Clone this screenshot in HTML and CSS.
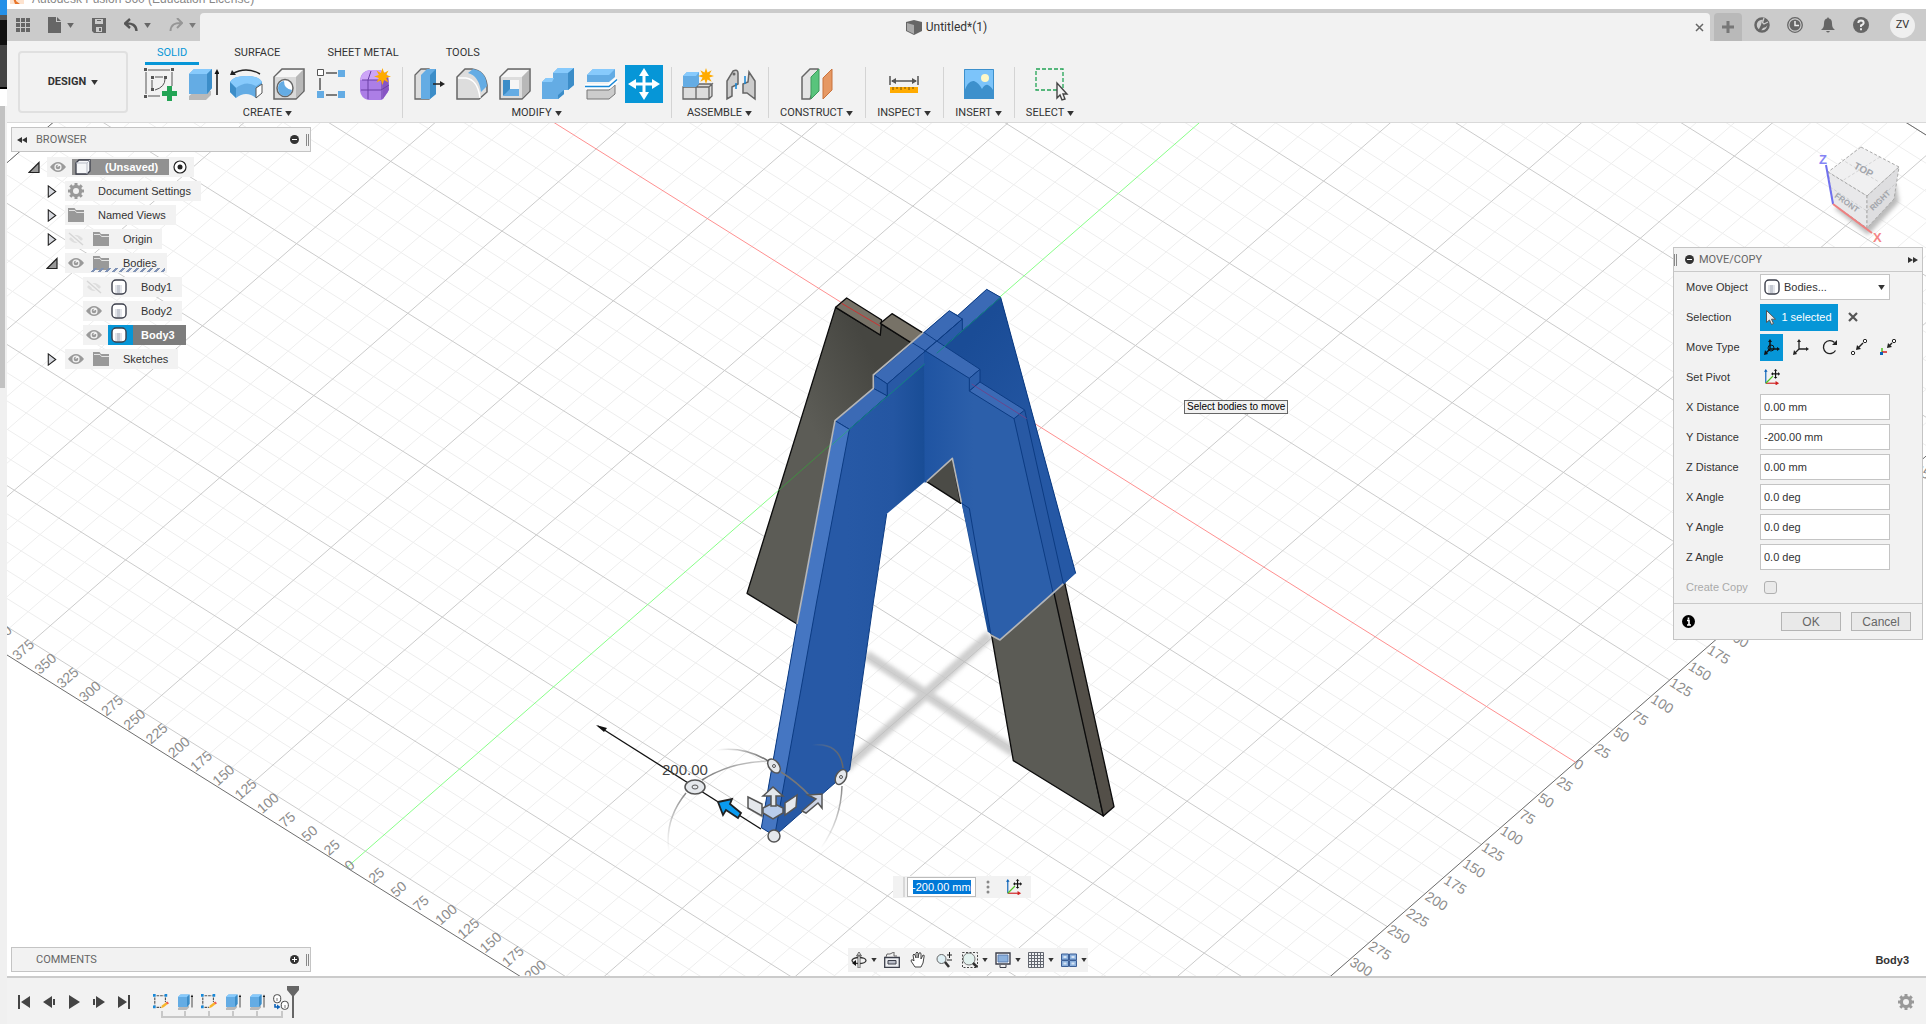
FILE: index.html
```html
<!DOCTYPE html>
<html lang="en">
<head>
<meta charset="utf-8">
<title>Autodesk Fusion 360</title>
<link rel="stylesheet" href="styles.css">
<script src="grid.js" defer></script>
</head>
<body>
<svg class="defs" aria-hidden="true">
  <symbol id="caret" viewBox="0 0 8 6"><path d="M0 0h8L4 6z" fill="currentColor"/></symbol>
  <symbol id="eye" viewBox="0 0 16 12"><path d="M0 6Q8-4 16 6Q8 16 0 6z" fill="#9a9a9a"/><circle cx="8" cy="6" r="3.6" fill="#f2f2f2"/><circle cx="8" cy="6" r="2.3" fill="#9a9a9a"/><path d="M8 6V4.500h2" stroke="#f2f2f2" fill="none"/></symbol>
  <symbol id="eye-off" viewBox="0 0 16 14"><path d="M1 7Q8-1 15 7Q8 15 1 7z" fill="#dedede"/><circle cx="8" cy="7" r="2.500" fill="#f2f2f2"/><path d="M1 1L15 13" stroke="#f2f2f2" stroke-width="4"/><path d="M1 1L15 13" stroke="#d6d6d6" stroke-width="1.500"/></symbol>
  <symbol id="folder" viewBox="0 0 16 14"><path d="M0 0h6.500L8 2h8v12H0z" fill="#999"/><path d="M1 2.500h6l1.500 2h7.500" stroke="#e4e4e4" fill="none"/></symbol>
  <symbol id="body" viewBox="0 0 16 16"><rect x="1" y="1" width="14" height="14" rx="4" fill="#fff" stroke="#3c3f4b" stroke-width="1.400"/><path d="M4 6h2v8H4z" fill="#e3e5ea"/><path d="M6 6h3v8H6z" fill="#c5c9d2"/><path d="M9 6h2v8H9z" fill="#e3e5ea"/></symbol>
  <symbol id="gear" viewBox="0 0 16 16"><path d="M6.500 0h3v2l1.700.7 1.500-1.400 2.100 2.100-1.500 1.500.7 1.600H16v3h-2l-.7 1.700 1.500 1.500-2.100 2.100-1.500-1.500-1.700.7v2h-3v-2l-1.700-.7-1.500 1.500-2.100-2.100 1.500-1.500L2 9.500H0v-3h2l.7-1.600L1.200 3.400l2.100-2.100 1.500 1.400L6.500 2z" fill="#999"/><circle cx="8" cy="8" r="3" fill="#f2f2f2"/></symbol>
  <symbol id="tri-closed" viewBox="0 0 10 14"><path d="M1 1l8 6-8 6z" fill="#d8dae0" stroke="#222" stroke-width="1.200"/></symbol>
  <symbol id="tri-open" viewBox="0 0 12 12"><path d="M1 11L11 1v10z" fill="#999" stroke="#222" stroke-width="1.200"/></symbol>
  <symbol id="extrude" viewBox="0 0 32 32"><path d="M2 28l6-5h16v4l-5 5H2z" fill="#b9b9b9"/><path d="M2 26V6l5-5h18v19l-5 6z" fill="#64ace4"/><path d="M2 6l5-5h18l-5 5z" fill="#87cafc"/><path d="M20 6l5-5v19l-5 6z" fill="#3c8dc8"/><path d="M30 27V4" stroke="#111" stroke-width="1.500"/><path d="M27.500 6L30 1l2.500 5z" fill="#111"/></symbol>
  <symbol id="sketch-small" viewBox="0 0 18 18"><path d="M4 2h9M2 4v9M14 4v5M4 15h5" stroke="#555" stroke-width="1.300" stroke-dasharray="3 1" fill="none"/><path d="M0 0h3v3H0zM13 0h3v3h-3zM0 13h3v3H0z" fill="#1788d8"/><path d="M9 16l1-3 5-4 2 2-5 4z" fill="#f7b52c"/><path d="M14.500 9.500l1.500-1.200 2 2-1.500 1.200z" fill="#e55"/></symbol>
  <symbol id="pivot" viewBox="0 0 18 18"><path d="M2 16V2" stroke="#0b62b8" stroke-width="1.300"/><path d="M0 3l2-3 2 3z" fill="#0b62b8"/><path d="M2 16h12" stroke="#d02020" stroke-width="1.300"/><path d="M13 13.500l4 2.500-4 2.500z" fill="#d02020"/><path d="M2 16l8-8" stroke="#4fc320" stroke-width="1.500"/><path d="M9 5.500h8M13 1.500v8" stroke="#111" stroke-width="1.300"/><path d="M8 5.500l2-2v4zM18 5.500l-2-2v4zM13 0l2 2h-4zM13 11l2-2h-4z" fill="#111"/></symbol>
  <symbol id="star" viewBox="0 0 16 16"><path d="M8 0l1.500 4.600L13.700 2.300 11.400 6.500 16 8l-4.600 1.500 2.300 4.200-4.200-2.300L8 16l-1.500-4.600-4.200 2.300 2.300-4.200L0 8l4.600-1.500L2.300 2.300l4.200 2.300z" fill="#ffab00"/></symbol>
</svg>

<aside class="desktop"><i class="d-blue"></i><i class="d-dark"></i><i class="d-gap"></i><i class="d-grey"></i></aside>

<div class="app">
  <header class="titlebar">
    <svg class="logo" viewBox="0 0 14 8"><path d="M0 0h14v6H0z" fill="#fde3cf"/><path d="M3 0h3v3l4 3H5z" fill="#e8762c"/></svg>
    <span>Autodesk Fusion 360 (Education License)</span>
  </header>

  <div class="tabbar">
    <nav class="quick">
      <button class="qb" aria-label="Data panel"><svg width="14" height="14" viewBox="0 0 14 14"><path d="M0 0h4v4H0zM5 0h4v4H5zM10 0h4v4h-4zM0 5h4v4H0zM5 5h4v4H5zM10 5h4v4h-4zM0 10h4v4H0zM5 10h4v4H5zM10 10h4v4h-4z" fill="#666"/></svg></button>
      <button class="qb" aria-label="File"><svg width="13" height="16" viewBox="0 0 13 16"><path d="M0 0h8v5h5v11H0zM9 0l4 4H9z" fill="#666"/></svg><svg class="car"><use href="#caret"/></svg></button>
      <button class="qb" aria-label="Save"><svg width="14" height="15" viewBox="0 0 14 15"><path d="M0 0h14v15H2l-2-2z" fill="#666"/><path d="M3 1h8v5H3zM4 9h6v5H4z" fill="#ccc"/><path d="M5 2h4v1H5zM7 10h2v3H7z" fill="#666"/></svg></button>
      <button class="qb" aria-label="Undo"><svg width="14" height="14" viewBox="0 0 14 14"><path d="M6 1L1 5.500 6 10M1 5.500Q12 4.500 12.500 13" fill="none" stroke="#555" stroke-width="2.400"/></svg><svg class="car"><use href="#caret"/></svg></button>
      <button class="qb dim" aria-label="Redo"><svg width="14" height="14" viewBox="0 0 14 14"><path d="M8 0l5 5-5 5M13 5Q2 4 1.500 13" fill="none" stroke="#8a8a8a" stroke-width="2"/></svg><svg class="car"><use href="#caret"/></svg></button>
    </nav>
    <div class="doc-tab">
      <h1><svg width="16" height="15" viewBox="0 0 16 15"><path d="M0 2l8-2 8 2v9l-8 4-8-4z" fill="#666"/><path d="M1 3l7 2v9l-7-3.500z" fill="#aaa"/></svg>Untitled*(1)</h1>
      <button class="close" aria-label="Close document"><svg width="9" height="9" viewBox="0 0 9 9"><path d="M1 1l7 7M8 1L1 8" stroke="#666" stroke-width="1.500"/></svg></button>
    </div>
    <button class="new-tab" aria-label="New design"><svg width="12" height="12" viewBox="0 0 12 12"><path d="M6 0v12M0 6h12" stroke="#777" stroke-width="3"/></svg></button>
    <div class="account">
      <button aria-label="Extensions"><svg width="16" height="16" viewBox="0 0 16 16"><circle cx="8" cy="8" r="6.500" fill="#ccc" stroke="#666" stroke-width="2.500"/><path d="M4 14l3-6 1-4 4-2 3 4-3 4-3 1-3 4z" fill="#666"/><path d="M10 1l-1.500 4.500L10 7l4-2" stroke="#ccc" stroke-width="1.300" fill="none"/></svg></button>
      <button aria-label="Job status"><svg width="16" height="16" viewBox="0 0 16 16"><circle cx="8" cy="8" r="7.300" fill="#ccc" stroke="#666" stroke-width="1.300"/><circle cx="8" cy="8" r="5.500" fill="#666"/><path d="M8 4v4.500h4" stroke="#eee" stroke-width="1.500" fill="none"/></svg></button>
      <button aria-label="Notifications"><svg width="14" height="16" viewBox="0 0 14 16"><path d="M7 0l1 1.500q3 .5 3 5Q11 11 14 13H0q3-2 3-6.500 0-4.500 3-5zM5 14h4q-2 3-4 0z" fill="#666"/></svg></button>
      <button aria-label="Help"><svg width="16" height="16" viewBox="0 0 16 16"><circle cx="8" cy="8" r="8" fill="#666"/><path d="M5.300 6Q5.300 3.500 8 3.500T10.700 6Q10.500 7.500 8 8.500V10M8 11.300v2" stroke="#eee" stroke-width="1.900" fill="none"/></svg></button>
      <button class="avatar">ZV</button>
    </div>
  </div>

  <div class="toolbar">
    <button class="workspace">DESIGN <svg class="car"><use href="#caret"/></svg></button>
    <div class="ribbon">
      <nav class="tabs"><a class="on" href="#solid">SOLID</a><a href="#surface">SURFACE</a><a href="#sheet">SHEET METAL</a><a href="#tools">TOOLS</a></nav>
      <div class="groups">
        <section class="group">
          <div class="icons">
            <button aria-label="Create sketch"><svg viewBox="0 0 32 32"><path d="M2 4v22M4 2h22M28 4v14M4 28h12" stroke="#555" stroke-width="1"/><path d="M0 0h3v3H0zM27 0h3v3h-3zM0 27h3v3H0z" fill="#555"/><path d="M8 12v8M11 9h8M21 11q0 8-10 11" fill="none" stroke="#555" stroke-width="1"/><path d="M7 8h3v3H7zM20 8h3v3h-3zM7 20h3v3H7z" fill="#555"/><path d="M23 18h5v5h5v5h-5v5h-5v-5h-5v-5h5z" fill="#23a455"/></svg></button>
            <button aria-label="Extrude"><svg><use href="#extrude"/></svg></button>
            <button aria-label="Revolve"><svg viewBox="0 0 32 32"><path d="M0 14q3-6 16-6t16 6v10l-6 6q-10-8-20 0l-6-6z" fill="#64ace4"/><path d="M0 14q3-6 16-6t16 6l-6 4Q16 12 6 20z" fill="#87cafc"/><path d="M0 14l6 6v10l-6-6z" fill="#3c8dc8"/><path d="M26 20l6-4v9l-6 5z" fill="#fff" stroke="#555"/><path d="M2 6q14-8 28 0" stroke="#222" fill="none" stroke-width="1.500"/><path d="M0 7l2-5 4 5z" fill="#222"/></svg></button>
            <button aria-label="Hole"><svg viewBox="0 0 32 32"><path d="M1 31V9l8-8h22v22l-8 8z" fill="#d9d9d9" stroke="#666" stroke-width="1.500"/><path d="M2 9l7.500-7H30l-7 7z" fill="#f6f6f6"/><path d="M23 9l7-7v21l-7 7z" fill="#b8b8b8"/><ellipse cx="12" cy="20" rx="8" ry="8.500" fill="#fff" stroke="#666" stroke-width="1.500"/><path d="M11 13q0 8 8 9-2 6-7 6-7-1-7-8 0-6 6-7z" fill="#64ace4"/></svg></button>
            <button aria-label="Pattern"><svg viewBox="0 0 32 32"><path d="M10 5h11M4 10v12M10 27h11" stroke="#555" stroke-width="1.500"/><path d="M1.500 1.500h6v6h-6z" fill="#fff" stroke="#555"/><path d="M22 2h7v7h-7zM1 23h7v7H1zM22 23h7v7h-7z" fill="#64ace4"/></svg></button>
            <button aria-label="Create form"><svg viewBox="0 0 32 32"><path d="M1 12Q2 3 11 2h10q9 3 9 12l-1 10-6 8H9q-7-2-8-9z" fill="#ac7ee6"/><path d="M1 12Q3 3 11 2h10q5 2 7 7l-6 3H6z" fill="#cda5f7"/><path d="M24 12l5-3 1 13-6 9z" fill="#8754c4"/><path d="M12 3l-3 9v19M2 22h20l8-5M3 12h20v19" stroke="#6a3fa5" fill="none"/><use href="#star" x="15" y="0" width="17" height="17"/></svg></button>
          </div>
          <button class="glabel">CREATE <svg class="car"><use href="#caret"/></svg></button>
        </section>
        <section class="group">
          <div class="icons">
            <button aria-label="Press pull"><svg viewBox="0 0 32 32"><path d="M2 31V7l6-6h8v30z" fill="#ddd" stroke="#666" stroke-width="1.300"/><path d="M8 31V7l6-6h9v25l-6 5z" fill="#64ace4"/><path d="M17 7l6-6v25l-6 5z" fill="#3c8dc8"/><path d="M20 16h8" stroke="#222" stroke-width="1.500"/><path d="M27 13l5 3-5 3z" fill="#222"/></svg></button>
            <button aria-label="Fillet"><svg viewBox="0 0 32 32"><path d="M1 31V9l8-8h7q13 2 15 16v7l-8 7z" fill="#ddd" stroke="#666" stroke-width="1.500"/><path d="M12 5l5-4q13 2 14 17l-6 6Q23 8 12 5z" fill="#64ace4"/><path d="M2 10h8q12 2 14 20" stroke="#fff" fill="none" stroke-width="1.500"/></svg></button>
            <button aria-label="Shell"><svg viewBox="0 0 32 32"><path d="M1 31V9l8-8h22v22l-8 8z" fill="#ddd" stroke="#666" stroke-width="1.500"/><path d="M2 9l7.500-7H30l-7 7z" fill="#f6f6f6"/><path d="M23 9l7-7v21l-7 7z" fill="#b8b8b8"/><path d="M4 12h16v16H4z" fill="#f6f6f6"/><path d="M4 12h7v11L4 28z" fill="#3c8dc8"/><path d="M4 28l7-7h9v7z" fill="#64ace4"/></svg></button>
            <button aria-label="Combine"><svg viewBox="0 0 32 32"><path d="M0 31V14l4-4h7V5l5-5h16v17l-6 5h-4v4l-6 5z" fill="#64ace4"/><path d="M0 14l4-4h8l-2 4zM11 5l5-5h16l-6 5z" fill="#87cafc"/><path d="M26 5l6-5v17l-6 5zM16 27l6-5v4l-6 5z" fill="#3c8dc8"/></svg></button>
            <button aria-label="Split body"><svg viewBox="0 0 32 32"><path d="M2 14V7l6-6h22v8l-6 5z" fill="#64ace4"/><path d="M2 7l6-6h22l-6 6z" fill="#87cafc"/><path d="M2 22h22l6-5v9l-6 5H2z" fill="#ccc" stroke="#777"/><path d="M0 18.500h24l8-7" stroke="#fff" stroke-width="5" fill="none"/><path d="M0 18.500h24l8-7" stroke="#1788d8" stroke-width="1.500" fill="none"/></svg></button>
            <button class="active" aria-label="Move/Copy"><svg viewBox="0 0 32 32"><path d="M16 5v22M5 16h22" stroke="#fff" stroke-width="3"/><path d="M16 0l5 8H11zM16 32l5-8H11zM0 16l8-5v10zM32 16l-8-5v10z" fill="#fff"/></svg></button>
          </div>
          <button class="glabel">MODIFY <svg class="car"><use href="#caret"/></svg></button>
        </section>
        <section class="group">
          <div class="icons">
            <button aria-label="New component"><svg viewBox="0 0 32 32"><path d="M1 19h13v12H1zM14 19h13v12H14zM14 19l3-3h13l-3 3zM27 19l3-3v12l-3 3z" fill="#ddd" stroke="#666" stroke-width="1.300"/><path d="M1 18V8l4-4h12v12l-3 3H1z" fill="#64ace4"/><path d="M1 8l4-4h12l-3 4z" fill="#87cafc"/><use href="#star" x="16" y="0" width="16" height="16"/></svg></button>
            <button aria-label="Joint"><svg viewBox="0 0 32 32"><path d="M2 31V13L8 3q5-2 5 2v11l-6 3v9zM30 31V13l-6-9-1 10-5 2v9h4z" fill="#ccc" stroke="#666" stroke-width="1.500"/><circle cx="9" cy="6" r="1.500" fill="#666"/><path d="M11 21v-6M20 8v8" stroke="#1788d8" stroke-width="1.500"/></svg></button>
          </div>
          <button class="glabel">ASSEMBLE <svg class="car"><use href="#caret"/></svg></button>
        </section>
        <section class="group">
          <div class="icons"><button aria-label="Offset plane"><svg viewBox="0 0 32 32"><path d="M1 31V9l8-8h8v8l-8 22z" fill="#e4e4e4" stroke="#666" stroke-width="1.500"/><path d="M10 31V9l8-8v22z" fill="#58c47c" stroke="#3c9a5c"/><path d="M22 31V10l9-9v21z" fill="#e69863" stroke="#c9733c"/></svg></button></div>
          <button class="glabel">CONSTRUCT <svg class="car"><use href="#caret"/></svg></button>
        </section>
        <section class="group">
          <div class="icons"><button aria-label="Measure"><svg viewBox="0 0 32 32"><path d="M2 8v9M30 8v9M4 13h24" stroke="#555" stroke-width="1.500"/><path d="M3 13l5-3v6zM29 13l-5-3v6z" fill="#555"/><path d="M2 19h28v6H2z" fill="#ffab00"/><path d="M5 19v3M9 19v2M13 19v3M17 19v2M21 19v3M25 19v2" stroke="#7a5200"/></svg></button></div>
          <button class="glabel">INSPECT <svg class="car"><use href="#caret"/></svg></button>
        </section>
        <section class="group">
          <div class="icons"><button aria-label="Insert image"><svg viewBox="0 0 32 32"><path d="M1 1h30v30H1z" fill="#7cc4fa"/><path d="M1 24Q5 12 11 13q5 2 8 8 3-5 6-4 4 2 6 7v7H1z" fill="#3d90cc"/><circle cx="22" cy="10" r="4" fill="#fdf8c8"/><path d="M1.500 1.500h29v29h-29z" fill="none" stroke="#3d90cc"/></svg></button></div>
          <button class="glabel">INSERT <svg class="car"><use href="#caret"/></svg></button>
        </section>
        <section class="group">
          <div class="icons"><button aria-label="Select"><svg viewBox="0 0 32 32"><path d="M2 1h27v21H2z" fill="none" stroke="#23a455" stroke-width="1.300" stroke-dasharray="4 2"/><path d="M23 15v15l3-3 2 5 3-1-2-5h4z" fill="#f2f2f2" stroke="#444" stroke-width="1.400"/></svg></button></div>
          <button class="glabel">SELECT <svg class="car"><use href="#caret"/></svg></button>
        </section>
      </div>
    </div>
  </div>

  <main class="viewport">
    <svg class="scene" viewBox="7 123 1919 853" preserveAspectRatio="xMidYMid slice">
      <defs>
        <linearGradient id="faceL" gradientUnits="userSpaceOnUse" x1="380" y1="0" x2="612" y2="0"><stop offset="0" stop-color="#2759a6"/><stop offset=".6" stop-color="#2456a2"/><stop offset="1" stop-color="#194d96"/></linearGradient>
        <linearGradient id="faceR" gradientUnits="userSpaceOnUse" x1="612" y1="0" x2="760" y2="0"><stop offset="0" stop-color="#1f54a2"/><stop offset="1" stop-color="#2c5faa"/></linearGradient>
        <linearGradient id="faceB" gradientUnits="userSpaceOnUse" x1="700" y1="260" x2="1000" y2="520"><stop offset="0" stop-color="#1a4c96"/><stop offset="1" stop-color="#2558a5"/></linearGradient>
        <linearGradient id="dark" gradientUnits="userSpaceOnUse" x1="250" y1="420" x2="480" y2="300"><stop offset="0" stop-color="#5c5c56"/><stop offset="1" stop-color="#464641"/></linearGradient>
        <linearGradient id="arcA" x1="0" y1="1" x2="1" y2="0"><stop offset="0" stop-color="#888" stop-opacity="0"/><stop offset=".5" stop-color="#666"/><stop offset="1" stop-color="#888" stop-opacity=".4"/></linearGradient>
        <linearGradient id="arcB" x1="0" y1="0" x2="1" y2="0"><stop offset="0" stop-color="#888" stop-opacity="0"/><stop offset="1" stop-color="#666"/></linearGradient>
        <linearGradient id="arcC" x1="0" y1="0" x2="0" y2="1"><stop offset="0" stop-color="#888"/><stop offset="1" stop-color="#888" stop-opacity="0"/></linearGradient>
        <filter id="soft" x="-10%" y="-10%" width="120%" height="120%"><feGaussianBlur stdDeviation="2"/></filter>
      </defs>
      <g id="grid"></g>
      <g id="ruler" class="ruler"></g>
      <path d="M845 768L990 635M866 655L1014 752" stroke="#bdbdbd" stroke-width="10" opacity=".75" filter="url(#soft)"/>
      <g transform="translate(720 270) scale(.33333)" stroke-linejoin="round">
        <g stroke="#0c0c0c" stroke-width="4">
          <path d="M347 112L481 195V160L620 246 620 400 345 600 231 1062 81 970z" fill="url(#dark)"/>
          <path d="M347 112L380 84 485 150 481 195z" fill="#777267"/>
          <path d="M481 160L516 131 640 208 600 235z" fill="#777267"/>
          <path d="M800 1010L1000 940 1150 1638 880 1472z" fill="#5b5b55"/>
          <path d="M1000 960L1030 920 1182 1610 1150 1638z" fill="#534f48"/>
          <path d="M620 635L697 565 722 700z" fill="#4b4b46"/>
        </g>
        <path d="M365 100L480 168" stroke="#c33" stroke-width="3"/>
        <path d="M345 512L175 662" stroke="#3f8f3f" stroke-width="3"/>
        <path d="M345 452L460 355V315L688 122 715 136 800 58 842 82 1067 910 840 1110 803 1085 725 700 697 565 500 732 461 990 389 1500 164 1698 124 1673 244 990z" fill="url(#faceL)"/>
        <path d="M842 82L1067 910 1000 972 882 446 748 363 640 215z" fill="url(#faceB)"/>
        <path d="M612 242L748 325V363L882 446 1000 972 840 1110 812 1090 725 700 697 565 614 640z" fill="url(#faceR)"/>
        <path d="M882 446L914 420 1030 940 1000 972z" fill="#2859a4"/>
        <g fill="#3b6ab5" stroke="#0c3b83" stroke-width="3">
          <path d="M800 58L842 82 650 250 615 225z"/>
          <path d="M727 147V182L650 250 646 215z" fill="#2a5ba7"/>
          <path d="M688 122L727 147 502 342 463 316z"/>
          <path d="M463 316L502 342V378L460 355z" fill="#2d5fab"/>
          <path d="M502 342L612 245V282L502 378z" fill="#2859a5" stroke="none"/>
          <path d="M460 355L502 378 388 478 345 452z"/>
          <path d="M612 187L650 213 780 298 748 325 575 217z"/>
          <path d="M748 325L780 298V336L748 363z" fill="#2d5fab"/>
          <path d="M748 363L780 336 914 420 882 446z"/>
          <path d="M345 452L388 478 291 990 164 1698 124 1673 244 990z" fill="#4576c2"/>
        </g>
        <g fill="none" stroke="#0c3b83" stroke-width="3">
          <path d="M650 213L612 245M727 147L502 342M882 446L1000 972M914 420L1030 940M842 82L1067 910M725 700L748 715 812 1090M500 732L461 990 389 1500 164 1698M502 342V378"/>
          <path d="M388 478L614 282M650 250L842 82" stroke="#138484"/>
          <path d="M755 342L920 446" stroke="#69468e"/>
          <path d="M388 478L335 525" stroke="#2f9d8a"/>
        </g>
        <path d="M231 1062L345 452 460 355V315L610 187M620 635L697 565 724 697M812 1095L840 1110 1030 942" fill="none" stroke="#b6b6b6" stroke-width="5"/>
      </g>
      <g fill="none">
        <path d="M598 726L761 829" stroke="#111" stroke-width="1.300"/>
        <path d="M596 725l11 3-3 4z" fill="#111"/>
        <path d="M669 852Q664 820 686 793M702 780Q730 762 769 761" stroke="url(#arcA)" stroke-width="1.500"/>
        <path d="M716 750Q745 746 768 761" stroke="url(#arcB)" stroke-width="1.500"/>
        <path d="M781 772Q797 782 810 796" stroke="#777" stroke-width="1.500"/>
        <path d="M812 745Q840 742 843 768" stroke="url(#arcB)" stroke-width="1.500"/>
        <path d="M842 786Q841 820 821 848" stroke="url(#arcC)" stroke-width="1.500"/>
        <g fill="#e5e8ec" stroke="#555" stroke-width="1.500">
          <ellipse cx="695" cy="787" rx="10" ry="7"/><ellipse cx="695" cy="787" rx="3" ry="2" stroke-width="1"/>
          <ellipse cx="774" cy="766" rx="5" ry="8" transform="rotate(-38 774 766)"/><circle cx="774" cy="766" r="1.500" stroke-width="1"/>
          <ellipse cx="841" cy="777" rx="5" ry="8" transform="rotate(28 841 777)"/><circle cx="841" cy="777" r="1.500" stroke-width="1"/>
          <path d="M748 797l14 7v12l-14-8zM797 795l-12 8v12l11-8z"/>
          <path d="M763 808l10-5 10 5v5l-10 6-10-6z" fill="#b8cceb"/>
          <path d="M771 806v-10h-8l10-9 10 9h-7v10z"/>
          <path d="M802 811l14-12-8-4 14-1 0 14-4-5-12 10z" fill="#cdd4e4"/>
          <circle cx="774" cy="836" r="6"/>
        </g>
        <path d="M718 802l14-3-2 5 11 9-3 5-12-8-3 5z" fill="#0a9bf0" stroke="#222" stroke-width="1.800"/>
      </g>
      <text x="662" y="775" class="dim-text">200.00</text>
      <g class="cube">
        <path d="M1834 208L1868 235 1899 202 1896 184z" fill="#bbb" stroke="none" filter="url(#soft)"/>
        <path d="M1861 147l38 20-32 29-39-24z" fill="#f0f0f1"/><path d="M1828 172l39 24v32l-34-24z" fill="#e8e8ea"/><path d="M1867 196l32-29-5 32-27 29z" fill="#dedee0"/>
        <path d="M1841 159l38 23M1880 157l-38 24M1830 187l37 24M1867 211l29-28" fill="none" opacity=".4"/>
        <path d="M1826 165l7 39" stroke="#7070ee" stroke-width="2" stroke-dasharray="none"/><path d="M1833 204l39 29" stroke="#ef8080" stroke-width="2" stroke-dasharray="none"/>
        <text x="1853" y="168" transform="rotate(28 1853 168)" class="cube-t">TOP</text>
        <text x="1834" y="197" transform="rotate(35 1834 197)" class="cube-s">FRONT</text>
        <text x="1873" y="211" transform="rotate(-44 1873 211)" class="cube-s">RIGHT</text>
        <text x="1819" y="164" class="axis z">Z</text><text x="1873" y="242" class="axis x">X</text>
      </g>
    </svg>

    <section class="browser">
      <header class="bar"><svg width="10" height="6" viewBox="0 0 10 6"><path d="M5 0v6L0 3zM10 0v6L5 3z" fill="#333"/></svg><h2>BROWSER</h2><button class="dot" aria-label="Collapse"><svg viewBox="0 0 9 9"><path d="M2 4.500h5"/></svg></button><i class="grip"></i></header>
      <ul class="tree">
        <li class="l0"><svg class="tw"><use href="#tri-open"/></svg><div class="item"><svg class="eye"><use href="#eye"/></svg><b class="root"><svg width="16" height="16" viewBox="0 0 16 16"><path d="M1 4l3-3h11v11l-3 3H1z" fill="#f5f6f8" stroke="#3c3f4b" stroke-width="1.300"/><path d="M1 4h11v11M12 4l3-3" stroke="#b9bdc8" fill="none"/></svg>(Unsaved)</b><svg width="14" height="14" viewBox="0 0 14 14"><circle cx="7" cy="7" r="6" fill="#fff" stroke="#222" stroke-width="1.200"/><circle cx="7" cy="7" r="2.500" fill="#222"/></svg></div></li>
        <li class="l1"><svg class="tw"><use href="#tri-closed"/></svg><div class="item"><svg class="ic"><use href="#gear"/></svg><span>Document Settings</span></div></li>
        <li class="l1"><svg class="tw"><use href="#tri-closed"/></svg><div class="item"><svg class="ic fo"><use href="#folder"/></svg><span>Named Views</span></div></li>
        <li class="l1"><svg class="tw"><use href="#tri-closed"/></svg><div class="item"><svg class="eye"><use href="#eye-off"/></svg><svg class="ic fo"><use href="#folder"/></svg><span>Origin</span></div></li>
        <li class="l1"><svg class="tw"><use href="#tri-open"/></svg><div class="item hatched"><svg class="eye"><use href="#eye"/></svg><svg class="ic fo"><use href="#folder"/></svg><span>Bodies</span></div></li>
        <li class="l2"><div class="item"><svg class="eye"><use href="#eye-off"/></svg><svg class="ic"><use href="#body"/></svg><span>Body1</span></div></li>
        <li class="l2"><div class="item"><svg class="eye"><use href="#eye"/></svg><svg class="ic"><use href="#body"/></svg><span>Body2</span></div></li>
        <li class="l2"><div class="item sel"><svg class="eye"><use href="#eye"/></svg><i><svg class="ic"><use href="#body"/></svg></i><b>Body3</b></div></li>
        <li class="l1"><svg class="tw"><use href="#tri-closed"/></svg><div class="item"><svg class="eye"><use href="#eye"/></svg><svg class="ic fo"><use href="#folder"/></svg><span>Sketches</span></div></li>
      </ul>
    </section>

    <p class="tooltip">Select bodies to move</p>

    <form class="mini">
      <i class="handle"></i><input aria-label="Distance" value="-200.00 mm"><svg width="4" height="14" viewBox="0 0 4 14"><circle cx="2" cy="2" r="1.500" fill="#888"/><circle cx="2" cy="7" r="1.500" fill="#888"/><circle cx="2" cy="12" r="1.500" fill="#888"/></svg><button type="button" aria-label="Set pivot"><svg width="16" height="16"><use href="#pivot"/></svg></button>
    </form>

    <form class="dialog">
      <header class="dhead"><i class="grip"></i><button type="button" class="dot" aria-label="Collapse"><svg viewBox="0 0 9 9"><path d="M2 4.500h5"/></svg></button><h2>MOVE/COPY</h2><svg width="10" height="6" viewBox="0 0 10 6"><path d="M0 0v6l5-3zM5 0v6l5-3z" fill="#333"/></svg></header>
      <div class="fields">
        <label for="obj">Move Object</label><div class="select"><svg class="ic"><use href="#body"/></svg><select id="obj"><option>Bodies...</option></select><svg class="car"><use href="#caret"/></svg></div>
        <span>Selection</span><div class="row"><button type="button" class="picked"><svg width="10" height="15" viewBox="0 0 10 15"><path d="M.5.5v12l3-2.500 2 4.500 2-1-2-4.300h4z" fill="#eee" stroke="#555"/></svg>1 selected</button><button type="button" class="clear" aria-label="Clear selection"><svg width="10" height="10" viewBox="0 0 10 10"><path d="M1 1l8 8M9 1L1 9" stroke="#555" stroke-width="2.200"/></svg></button></div>
        <span>Move Type</span><div class="row types">
          <button type="button" class="active" aria-label="Free move"><svg viewBox="0 0 16 16"><path d="M6 10V2M6 10h8M6 10l-4 4" stroke="#111" stroke-width="1.500"/><path d="M4 3l2-3 2 3zM13 8l3 2-3 2zM0 16l1-5 3 4z" fill="#111"/><circle cx="7" cy="9" r="3" fill="none" stroke="#111"/></svg></button>
          <button type="button" aria-label="Translate"><svg viewBox="0 0 16 16"><path d="M6 10V2M6 10h8M6 10l-4 4" stroke="#222" stroke-width="1.300" fill="none"/><path d="M4 3l2-3 2 3zM13 8l3 2-3 2zM0 16l1-5 3 4z" fill="#222"/></svg></button>
          <button type="button" aria-label="Rotate"><svg viewBox="0 0 16 16"><path d="M12.500 3.500a6.500 6.500 0 1 0 1 8" stroke="#222" stroke-width="1.300" fill="none"/><path d="M15 1v5H10z" fill="#222"/></svg></button>
          <button type="button" aria-label="Point to point"><svg viewBox="0 0 16 16"><circle cx="2" cy="14" r="1.700" fill="#fff" stroke="#222"/><circle cx="14" cy="2" r="1.700" fill="#fff" stroke="#222"/><path d="M12 4L7 9" stroke="#222" stroke-width="1.400"/><path d="M5 11l1-5 4 4z" fill="#222"/></svg></button>
          <button type="button" aria-label="Point to position"><svg viewBox="0 0 16 16"><circle cx="14" cy="2" r="1.700" fill="#fff" stroke="#222"/><path d="M12 4L9 7" stroke="#222" stroke-width="1.400"/><path d="M7 9l1-5 4 4z" fill="#222"/><path d="M2 13V9" stroke="#4fc320" stroke-width="1.500"/><path d="M2 13h5" stroke="#d02020" stroke-width="1.500"/><path d="M0 13h3v3H0z" fill="#0b62b8"/></svg></button>
        </div>
        <span>Set Pivot</span><div class="row types"><button type="button" aria-label="Set pivot"><svg><use href="#pivot"/></svg></button></div>
        <label for="xd">X Distance</label><input id="xd" value="0.00 mm">
        <label for="yd">Y Distance</label><input id="yd" value="-200.00 mm">
        <label for="zd">Z Distance</label><input id="zd" value="0.00 mm">
        <label for="xa">X Angle</label><input id="xa" value="0.0 deg">
        <label for="ya">Y Angle</label><input id="ya" value="0.0 deg">
        <label for="za">Z Angle</label><input id="za" value="0.0 deg">
        <label for="cc" class="off">Create Copy</label><input id="cc" type="checkbox" disabled>
      </div>
      <footer><svg width="13" height="13" viewBox="0 0 13 13"><circle cx="6.500" cy="6.500" r="6.500" fill="#000"/><path d="M5 5.500h2V10M5 10h4M6.500 2.500v2" stroke="#fff" stroke-width="1.600" fill="none"/></svg><button type="button">OK</button><button type="button">Cancel</button></footer>
    </form>

    <section class="comments bar"><h2>COMMENTS</h2><button class="dot" aria-label="Expand"><svg viewBox="0 0 9 9"><path d="M2 4.500h5M4.500 2v5"/></svg></button><i class="grip"></i></section>

    <nav class="navbar">
      <button class="w" aria-label="Orbit"><svg viewBox="0 0 16 16"><ellipse cx="8" cy="8.500" rx="7" ry="3" fill="none" stroke="#333" stroke-width="1.300"/><path d="M7 3h2v13H7zM5.500 4L8 0l2.500 4z" fill="#fff" stroke="#444" stroke-width=".8"/><path d="M1 11l4-3v6z" fill="#111"/></svg><svg class="car"><use href="#caret"/></svg></button>
      <button aria-label="Look at"><svg viewBox="0 0 16 16"><path d="M.7 5.500h14.600v10H.7z" fill="#eef0f3" stroke="#3c3f4b" stroke-width="1.300"/><path d="M4 8.500h8V12H4z" fill="#b9bdc8" stroke="#3c3f4b"/><path d="M2 5l1-3h3l4-2v4h3" fill="none" stroke="#666"/></svg></button>
      <button aria-label="Pan"><svg viewBox="0 0 16 16"><path d="M5 15L1 9q0-2 2-1l1 1-1-6q1-2 2 0l1 3V1q1-2 2 0v5l1-5q2-1 2 1v5l2-4q2 0 1 2l-1 6-2 4z" fill="#fff" stroke="#444"/></svg></button>
      <button aria-label="Zoom"><svg viewBox="0 0 16 16"><circle cx="5.500" cy="7" r="4.500" fill="#dff0f5" stroke="#666"/><path d="M9 10l4 5" stroke="#333" stroke-width="2.500"/><path d="M11 3h5M13.500 0v6M11 8h5" stroke="#222"/></svg></button>
      <button class="w" aria-label="Fit"><svg viewBox="0 0 16 16"><path d="M.5.5h15v15H.5z" fill="none" stroke="#444" stroke-dasharray="2 1.500"/><circle cx="7" cy="7" r="6" fill="#e2f1ee" stroke="#777"/><path d="M11 11l4 4" stroke="#333" stroke-width="2.500"/></svg><svg class="car"><use href="#caret"/></svg></button>
      <button class="w" aria-label="Display settings"><svg viewBox="0 0 16 16"><path d="M1 1h14v11H1z" fill="#fff" stroke="#3c3f4b" stroke-width="1.400"/><path d="M3 3h10v7H3z" fill="#8cb1dd" stroke="#5a7db0"/><path d="M5 13v2.500h6V13" fill="none" stroke="#3c3f4b"/></svg><svg class="car"><use href="#caret"/></svg></button>
      <button class="w" aria-label="Grid and snaps"><svg viewBox="0 0 16 16"><path d="M.5.5h15v15H.5z" fill="#eef0f3"/><path d="M.5.500h15v15H.5zM3.500 0v16M6.500 0v16M9.500 0v16M12.500 0v16M0 3.500h16M0 6.500h16M0 9.500h16M0 12.500h16" fill="none" stroke="#62666f"/></svg><svg class="car"><use href="#caret"/></svg></button>
      <button class="w" aria-label="Viewports"><svg viewBox="0 0 16 16"><path d="M.5 2h7v6h-7zM8.500 2h7v6h-7zM.5 8.500h7v6h-7zM8.500 8.500h7v6h-7z" fill="#8cb1dd" stroke="#3d5f96"/><path d="M2.500 4h3v2h-3zM10.500 4h3v2h-3zM2.500 10.500h3v2h-3zM10.500 10.500h3v2h-3z" fill="#d7e5f5"/></svg><svg class="car"><use href="#caret"/></svg></button>
    </nav>
    <p class="status">Body3</p>
  </main>

  <footer class="timeline">
    <div class="play">
      <button aria-label="To start"><svg viewBox="0 0 14 14"><path d="M1 0h2v14H1zM13 1v12L4 7z" fill="#444"/></svg></button>
      <button aria-label="Step back"><svg viewBox="0 0 14 14"><path d="M10 1v12L1 7zM11 4h2v6h-2z" fill="#444"/></svg></button>
      <button aria-label="Play"><svg viewBox="0 0 14 14"><path d="M2 0l11 7-11 7z" fill="#444"/></svg></button>
      <button aria-label="Step forward"><svg viewBox="0 0 14 14"><path d="M4 1v12l9-6zM1 4h2v6H1z" fill="#444"/></svg></button>
      <button aria-label="To end"><svg viewBox="0 0 14 14"><path d="M11 0h2v14h-2zM1 1v12l9-6z" fill="#444"/></svg></button>
    </div>
    <div class="history">
      <div class="steps">
        <button aria-label="Sketch 1"><svg><use href="#sketch-small"/></svg></button>
        <button aria-label="Extrude 1"><svg><use href="#extrude"/></svg></button>
        <button aria-label="Sketch 2"><svg><use href="#sketch-small"/></svg></button>
        <button aria-label="Extrude 2"><svg><use href="#extrude"/></svg></button>
        <button aria-label="Extrude 3"><svg><use href="#extrude"/></svg></button>
        <button aria-label="Copy body"><svg viewBox="0 0 16 16"><rect x=".7" y=".7" width="7" height="8" rx="3" fill="#fff" stroke="#444"/><rect x="8.300" y="7.300" width="7" height="8" rx="3" fill="#fff" stroke="#444"/><path d="M3 4h2v3H3zM11 11h2v3h-2z" fill="#bbb"/><path d="M2 10v3h3" stroke="#0b62b8" stroke-width="1.600" fill="none"/><path d="M4 10.500l3.500 2.500L4 15.500z" fill="#0b62b8"/></svg></button>
      </div>
      <svg class="bracket" viewBox="0 0 122 7"><path d="M1 0v6h120V0M24 0v6M48 0v6M72 0v6M96 0v6" fill="none" stroke="#c8c8c8" stroke-width="2"/></svg>
    </div>
    <svg class="marker" width="12" height="32" viewBox="0 0 12 32"><path d="M0 0h12v4L7 10v22H5V10L0 4z" fill="#666"/></svg>
    <button class="prefs" aria-label="Timeline settings"><svg width="16" height="16"><use href="#gear"/></svg></button>
  </footer>
</div>
</body>
</html>
```
FILE: styles.css
```css
* { box-sizing: border-box; }
html, body { height: 100%; margin: 0; }
body {
  display: flex;
  overflow: hidden;
  background: #fff;
  color: #333;
  font: 11px/16px "Liberation Sans", Arial, sans-serif;
}
h1, h2, p, ul { margin: 0; padding: 0; font-weight: normal; }
button, input, select { font: inherit; color: inherit; }
button { padding: 0; border: 0; background: none; display: flex; flex: none; align-items: center; justify-content: center; }
svg { display: block; flex: none; }
.defs { position: absolute; width: 0; height: 0; }
.car { width: 7px; height: 5px; color: #333; }

.desktop { display: flex; flex-direction: column; flex: 0 0 7px; background: #f0f0f0; }
.d-blue { height: 15px; background: #2490e8; }
.d-dark { height: 74px; background: linear-gradient(#555 0 5px, #111 5px 30px, #444 30px 72px, #000 72px); }
.d-gap { height: 17px; background: #fff; }
.d-grey { height: 282px; background: #c2c2c2; border-right: 2px solid #f0f0f0; }

.app { display: flex; flex-direction: column; flex: 1; min-width: 0; }
.titlebar { display: flex; align-items: flex-end; gap: 8px; height: 9px; padding: 0 0 3px 3px; overflow: hidden; color: #888; font-size: 12px; line-height: 14px; }
.logo { width: 14px; height: 8px; }

.tabbar { display: flex; height: 32px; padding-top: 4px; background: #cbcbcb; }
.quick { display: flex; align-items: center; gap: 18px; width: 193px; padding: 0 0 4px 9px; }
.qb { gap: 6px; }
.quick .car { color: #666; }
.dim { opacity: .8; }
.doc-tab { display: flex; flex: 1; align-items: center; padding: 0 5px 0 0; background: #f2f2f2; border-radius: 4px 4px 0 0; }
.doc-tab h1 { display: flex; flex: 1; justify-content: center; align-items: center; gap: 4px; font: 12px/16px Roboto, sans-serif; }
.close { width: 12px; height: 16px; }
.new-tab { width: 28px; margin-left: 4px; background: #b9b9b9; border-radius: 4px 4px 0 0; }
.account { display: flex; align-items: center; gap: 17px; padding: 0 11px 4px 12px; }
.account button { min-width: 16px; }
.account .avatar { width: 25px; height: 25px; margin-left: 4px; border-radius: 50%; background: #efefef; font: 11px/16px Roboto, sans-serif; }

.toolbar { display: flex; height: 82px; background: #f2f2f2; border-bottom: 1px solid #d9d9d9; font-family: Roboto, sans-serif; }
.workspace { gap: 5px; width: 110px; height: 62px; margin: 10px 6px 0 11px; border: 2px solid #e0e0e0; border-radius: 4px; font-weight: bold; }
.ribbon { display: flex; flex-direction: column; }
.tabs { display: flex; gap: 23px; height: 24px; padding-left: 11px; }
.tabs a { padding: 4px 12px 0; color: #333; text-decoration: none; }
.tabs .on { color: #0696d7; border-bottom: 3px solid #0696d7; }
.groups { display: flex; }
.group { position: relative; display: flex; flex-direction: column; align-items: center; gap: 2px; padding: 0 7px 0 5px; }
.group:not(:last-child)::after { content: ""; position: absolute; right: 0; top: 2px; height: 51px; border-right: 1px solid #d4d4d4; }
.icons { display: flex; gap: 5px; padding: 0 2px; }
.icons button { width: 38px; height: 38px; }
.icons svg { width: 32px; height: 32px; overflow: visible; }
.active { background: #0696d7; }
.glabel { gap: 3px; padding: 0 6px; height: 16px; white-space: nowrap; }

.viewport { position: relative; flex: 1; min-height: 0; overflow: hidden; background: #fff; }
.scene { position: absolute; inset: 0; width: 100%; height: 100%; }
.minor { stroke: #eee; }
.major { stroke: #cbcbcb; }
.edge { stroke: #6e6e6e; }
.axis-x { stroke: #ff9090; }
.axis-y { stroke: #88ff88; }
.ruler { fill: #8d8d8d; font-size: 14px; }
.dim-text { fill: #444; font-size: 15px; }
.cube { stroke: #aaa; stroke-dasharray: 3 2; }
.cube text { stroke: none; fill: #a2a5ab; font-weight: bold; }
.cube .cube-t { font-size: 10px; }
.cube .cube-s { font-size: 8px; }
.cube .axis { font-size: 13px; }
.cube .z { fill: #8585f5; }
.cube .x { fill: #f58585; }

.bar { display: flex; align-items: center; width: 300px; height: 25px; padding: 0 1px 0 5px; border: 1px solid #c4c4c4; background: #f2f2f2; }
.bar h2 { flex: 1; padding-left: 9px; color: #666; font: 11px/16px Roboto, sans-serif; }
.dot { width: 9px; height: 9px; border-radius: 50%; background: #333; }
.dot svg { width: 9px; height: 9px; stroke: #fff; stroke-width: 1; }
.grip { width: 3px; height: 12px; margin-left: 7px; border: solid #888; border-width: 0 1px; }

.browser { position: absolute; left: 4px; top: 4px; }
.tree { display: flex; flex-direction: column; gap: 4px; padding-top: 5px; list-style: none; }
.tree li { display: flex; align-items: center; height: 20px; }
.tw { width: 12px; height: 13px; margin-right: 7px; }
.l0 { padding-left: 17px; }
.l1 { padding-left: 35px; }
.l2 { padding-left: 72px; }
.item { display: flex; align-items: center; height: 20px; padding: 0 10px 0 3px; background: #f2f2f2; }
.eye { width: 16px; height: 14px; margin-right: 9px; }
.ic { width: 16px; height: 16px; margin-right: 14px; }
.fo { height: 14px; }
.root { display: flex; align-items: center; gap: 14px; height: 16px; margin-left: -3px; margin-right: 4px; padding: 0 11px 0 3px; background: #919191; color: #fff; }
.l0 .item { padding-right: 7px; }
.sel { padding-right: 0; }
.sel .eye { margin-right: 6px; }
.sel i { padding: 2px 9px 2px 3px; height: 20px; width: 25px; background: #0696d7; }
.sel b { height: 20px; padding: 2px 11px 0 8px; background: #7d7d7d; color: #fff; }
.hatched { position: relative; }
.hatched::after { content: ""; position: absolute; left: 25px; right: 2px; bottom: 1px; height: 4px; background: repeating-linear-gradient(135deg, transparent 0 3px, #7f92b5 3px 5px); }

.tooltip { position: absolute; left: 1177px; top: 277px; padding: 0 2px; border: 1px solid #666; background: #f2f2f2; color: #000; font-size: 10px; line-height: 12px; }

.mini { position: absolute; left: 886px; top: 753px; display: flex; align-items: center; height: 22px; padding-right: 9px; background: #f2f2f2; }
.mini input { width: 69px; height: 20px; margin-right: 10px; padding: 0 4px; border: 1px solid #bbb; background: linear-gradient(#0078d7, #0078d7) center / 58px 14px no-repeat #fff; color: #fff; }
.mini button { margin-left: 16px; }
.handle { width: 4px; height: 20px; margin: 0 2px 0 8px; border: solid #d8d8d8; border-width: 0 2px 0 0; }

.dialog { position: absolute; right: 3px; top: 124px; width: 250px; border: 1px solid #c4c4c4; background: #f2f2f2; }
.dhead { display: flex; align-items: center; height: 24px; padding-right: 4px; border-bottom: 1px solid #c9c9c9; }
.dhead .grip { margin: 0 8px 0 0; }
.dhead h2 { flex: 1; padding-left: 5px; color: #666; font: 11px/16px Roboto, sans-serif; }
.fields { display: grid; grid-template-columns: 74px 130px; grid-auto-rows: 30px; align-items: center; padding-left: 12px; }
.fields > input, .select { width: 130px; height: 26px; padding: 0 3px; border: 1px solid #c4c4c4; background: #fff; }
.select { display: flex; align-items: center; padding-right: 4px; }
.select .ic { margin-right: 4px; }
.select select { flex: 1; min-width: 0; padding: 0; border: 0; background: none; appearance: none; }
.row { display: flex; align-items: center; white-space: nowrap; }
.picked { gap: 5px; width: 78px; height: 27px; background: #0696d7; color: #fff; }
.clear { width: 30px; height: 26px; }
.types { gap: 6px; }
.types button { width: 23px; height: 27px; }
.types svg { width: 16px; height: 16px; }
.off { color: #aaa; }
.fields > input[type=checkbox] { appearance: none; width: 13px; height: 13px; margin: 0 4px; border-radius: 3px; border-color: #b0b0b0; background: #eaeaea; }
.dialog footer { display: flex; align-items: center; gap: 10px; height: 36px; margin-top: 1px; padding: 0 11px 0 8px; border-top: 1px solid #c9c9c9; }
.dialog footer svg { margin-right: auto; }
.dialog footer button { width: 60px; height: 19px; border: 1px solid #b4b4b4; background: #e9e9e9; color: #666; font-size: 12px; }

.comments { position: absolute; left: 4px; bottom: 4px; padding-left: 15px; }
.navbar { position: absolute; left: 841px; bottom: 4px; display: flex; align-items: center; gap: 10px; height: 24px; padding: 0 4px 0 3px; background: #f2f2f2; }
.navbar svg { width: 16px; height: 16px; }
.navbar .w { gap: 4px; margin-right: -3px; }
.navbar .car { width: 6px; height: 4px; }
.status { position: absolute; right: 17px; bottom: 8px; font-weight: bold; }

.timeline { display: flex; align-items: center; height: 48px; padding: 2px 12px 0 9px; border-top: 2px solid #cbcbcb; background: #f2f2f2; }
.play { display: flex; gap: 10px; }
.play button { width: 15px; }
.play svg { width: 14px; height: 14px; }
.history { position: relative; margin-left: 22px; }
.steps { display: flex; gap: 8px; }
.steps svg { width: 16px; height: 16px; overflow: visible; }
.bracket { position: absolute; left: 8px; top: 17px; width: 122px; height: 7px; }
.marker { margin-left: -2px; }
.prefs { margin-left: auto; }
```
FILE: grid.js
```js
// Orthographic ground grid: one unit is 25 mm, every fifth line is heavier.
const NS = "http://www.w3.org/2000/svg";
const project = (u, v) => [930 + u * 22.26 + v * 18.82, 358 + u * 13.94 - v * 16.44];
const grid = document.getElementById("grid");
const ruler = document.getElementById("ruler");

function line(a, b, cls) {
  const el = document.createElementNS(NS, "line");
  const [x1, y1] = project(...a);
  const [x2, y2] = project(...b);
  el.setAttribute("x1", x1); el.setAttribute("y1", y1);
  el.setAttribute("x2", x2); el.setAttribute("y2", y2);
  el.setAttribute("class", cls);
  grid.append(el);
}

function label(u, v, angle, value) {
  const el = document.createElementNS(NS, "text");
  const [x, y] = project(u, v);
  el.setAttribute("transform", `translate(${x} ${y}) rotate(${angle})`);
  el.setAttribute("x", value ? 2 : 0);
  el.setAttribute("y", 5);
  el.textContent = value;
  ruler.append(el);
}

for (const heavy of [false, true]) {
  for (let i = -30; i <= 30; i++) {
    if ((i % 5 === 0) !== heavy) continue;
    const cls = heavy ? "major" : "minor";
    if (i < 30 && i !== 0) line([i, -30], [i, 30], cls);
    if (i !== 0) line([-30, i], [29, i], cls);
  }
}
line([-30, -31], [29, -31], "edge");
line([29, -31], [29, 30], "edge");
line([-30, 30], [29, 30], "edge");
line([-30, -31], [-30, 30], "edge");
line([-30, 0], [29, 0], "axis-x");
line([0, -31], [0, 30], "axis-y");

for (let u = -16; u <= 8; u++) label(u, -31, -41, Math.abs(u) * 25);
for (let v = -12; v <= 19; v++) label(29, v, 32, Math.abs(v) * 25);
```
